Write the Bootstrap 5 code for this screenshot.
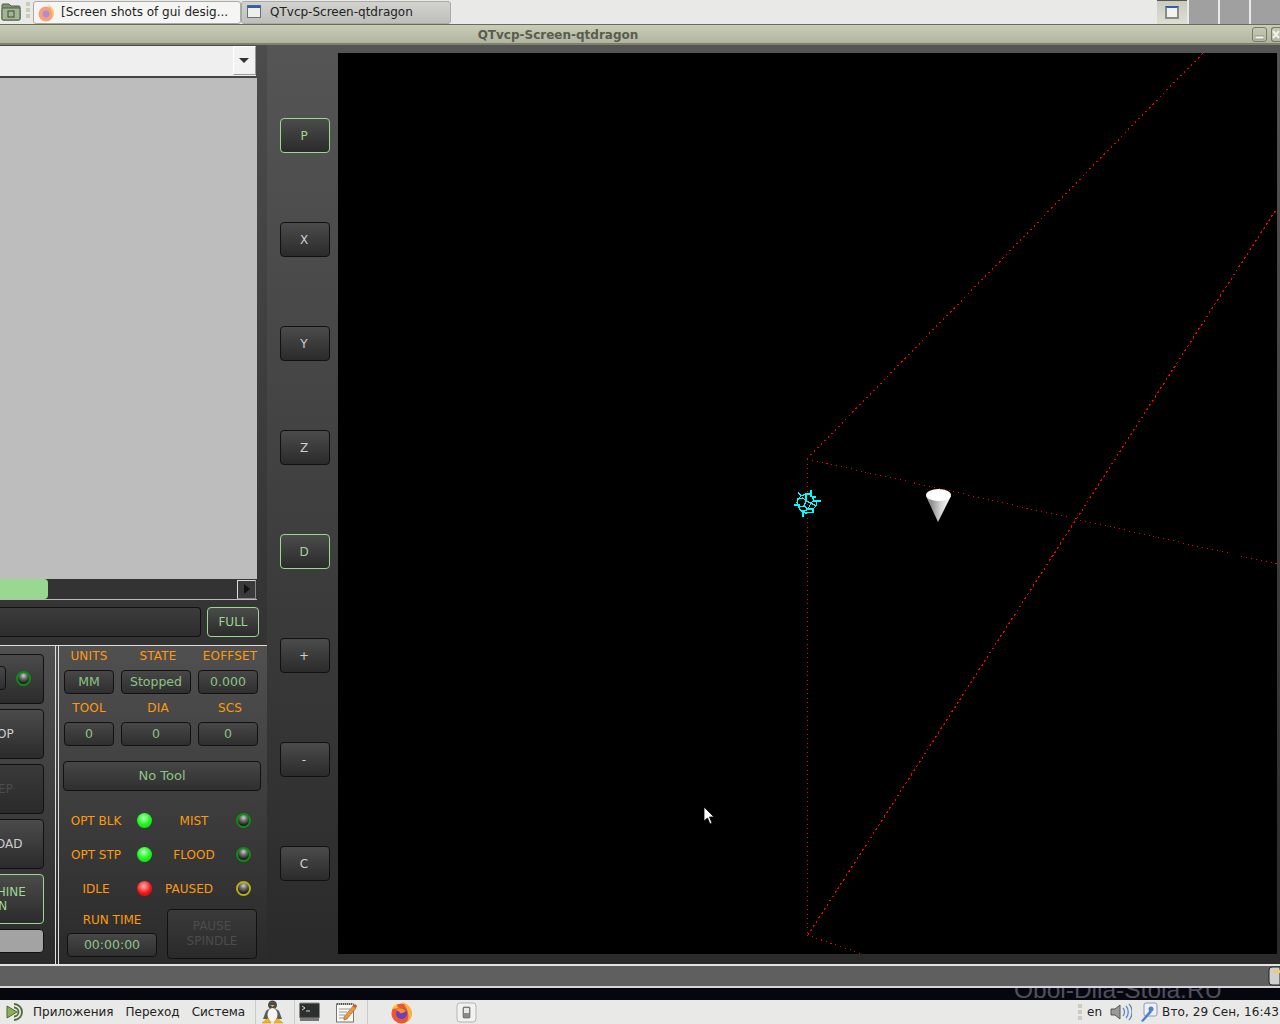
<!DOCTYPE html>
<html lang="ru">
<head>
  <meta charset="UTF-8">
  <meta name="viewport" content="width=device-width, initial-scale=1.0">
  <title>QTvcp-Screen-qtdragon</title>
  <link rel="stylesheet" href="https://cdn.jsdelivr.net/npm/bootstrap@5.3.0/dist/css/bootstrap.min.css">
  <style>
    html, body { width: 1280px; height: 1024px; overflow: hidden; margin: 0; }
    body { font-family: "DejaVu Sans", sans-serif; font-size: 12px; background: #e8e8e6; }
    svg { flex-shrink: 0; }

    /* top panel */
    .top-panel { height: 24px; background: #e9e9e7; color: #222; font-size: 12px; }
    .task { height: 23px; margin-top: 1px; padding-bottom: 2px; border: 1px solid #a9a9a5; border-radius: 3px; }
    .task-on { width: 208px; margin-left: 2px; background: #f5f5f3; }
    .task-off { width: 210px; background: linear-gradient(#d2d2ce, #bebeba); }
    .grip { width: 5px; margin-left: 5px; }
    .grip i { display: block; width: 4px; height: 4px; margin: 2px 0; background: #c9cbbd; }
    .ws-cell { width: 30px; height: 24px; background: linear-gradient(#c9ccbc, #dcdfd2); border-top: 1px solid #555; }
    .ws-off { width: 29px; height: 24px; margin-left: 2px; background: #a0a0a0; }
    .ws-icon { width: 14px; height: 13px; background: #f2f2f0; border: 2px solid #8a8a8a; border-top-color: #2d5fae; }

    /* title bar */
    .title-bar { height: 21px; background: linear-gradient(#c9cdb8, #b1b59e); border-top: 1px solid #6b6d5c; border-bottom: 2px solid #7e8170; }
    .title-text { width: 1116px; padding-top: 1px; font-weight: 700; font-size: 12px; color: #5a5d4e; }
    .win-btn { width: 15px; height: 15px; border: 1px solid #777a69; border-radius: 3px; }
    .win-close { width: 9px; border-right: 0; border-radius: 3px 0 0 3px; }

    /* app window */
    .app-body { height: 919px; background: linear-gradient(#555, #2a2a2a); color: #9ad98e; }
    .left-col { width: 267px; background: rgba(0,0,0,.1); }
    .combo { width: 256px; height: 32px; margin-top: 1px; background: #efefef; border-bottom: 2px solid #444; }
    .combo-drop { width: 23px; height: 29px; background: #f2f2f2; border: 1px solid #fff; border-right-color: #999; border-bottom-color: #999; }
    .caret-down { width: 0; height: 0; border: 5px solid transparent; border-top: 5px solid #333; border-bottom: 0; margin-right: 2px; }
    .file-view { width: 257px; height: 501px; background: #bdbdbd; }
    .scroll-row { width: 257px; height: 21px; background: #333; border-bottom: 1px solid #bbb; }
    .scroll-thumb { width: 48px; height: 20px; background: #98d890; border-radius: 0 4px 4px 0; }
    .scroll-arrow { width: 19px; height: 19px; margin-right: 1px; background: #3a3a3a; border: 1px solid #ddd; border-right-color: #888; border-bottom-color: #888; }
    .caret-right { width: 0; height: 0; border: 5px solid transparent; border-left: 6px solid #111; border-right: 0; }
    .path-row { height: 30px; margin-top: 7px; gap: 6px; }
    .path-box { width: 201px; height: 30px; background: linear-gradient(#3c3c3c, #2d2d2d); border: 1px solid #111; border-left: 0; border-radius: 0 4px 4px 0; }
    .full-btn { width: 52px; }
    .lower-pane { border-top: 1px solid #ddd; height: 319px; background: linear-gradient(#505050, #2a2a2a); }
    .side-pane { width: 56px; overflow: hidden; border-right: 1px solid #ddd; padding-top: 8px; }
    .side-stack { width: 92px; margin-left: -48px; gap: 5px; }
    .info-pane { width: 209px; margin-left: 2px; border-left: 1px solid #ddd; }

    .gui-btn { display: flex; align-items: center; justify-content: center; padding: 0; font-size: 12px; line-height: 14px; color: #cfcfcf; background: linear-gradient(#4b4b4b, #2b2b2b); border: 1px solid #111; border-radius: 4px; }
    .gui-green { color: #9ad98e; border: 1px solid #9ad98e; }
    .gui-off { color: #4c4c4c; background: linear-gradient(#3a3a3a, #2a2a2a); line-height: 15px; }
    .gui-tall { height: 50px; }
    .gui-box { display: flex; align-items: center; justify-content: center; height: 24px; font-size: 12.5px; color: #8cc483; background: linear-gradient(#474747, #2f2f2f); border: 1px solid #111; border-radius: 4px; }
    .gui-bar { height: 24px; background: #a3a3a3; border: 1px solid #111; border-radius: 4px; }
    .led-seat { width: 40px; margin-right: 10px; margin-top: -2px; }
    .led-first { margin-right: 12px; margin-top: -2px; }
    .orange { color: #ff9a0d; }

    .stat-grid { display: grid; grid-template-columns: 50px 70px 60px; column-gap: 7px; row-gap: 4px; margin-left: 5px; }
    .stat-label { display: flex; align-items: center; justify-content: center; height: 20px; white-space: nowrap; letter-spacing: .2px; }
    .tool-box { width: 198px; height: 30px; margin: 15px 0 12px 4px; font-size: 13px; }
    .led-row { display: grid; grid-template-columns: 78px 19px 80px 19px; height: 34px; align-items: center; }
    .led-cap { padding: 2px 4px 0 0; }
    .led-cap-wide { padding: 2px 14px 0 0; }
    .led { width: 15px; height: 15px; border-radius: 50%; }
    .led-dark { background: radial-gradient(circle at 50% 25%, #cfcfcf 0, #6a6a6a 35%, #242424 70%, #111); border: 2px solid #0a8f0f; }
    .led-amber { background: radial-gradient(circle at 50% 25%, #cfcfcf 0, #6a6a6a 35%, #242424 70%, #111); border: 2px solid #b8b010; }
    .led-green { background: radial-gradient(circle at 45% 35%, #b6ffb6, #1cf51c 50%, #0fd00f); }
    .led-red { background: radial-gradient(circle at 45% 35%, #ffb0b0, #f31414 55%, #d80000); }
    .time-col { width: 90px; margin-left: 8px; }
    .time-label { height: 22px; margin-bottom: 2px; }
    .pause-btn { width: 90px; height: 50px; margin-left: 10px; }

    .tool-col { width: 71px; padding-top: 73px; gap: 69px; }
    .axis-btn { width: 50px; height: 35px; margin-left: 13px; padding: 1px 2px 0 0; }
    .view-col { width: 942px; padding: 8px 0 9px 0; }
    .gl-view { width: 939px; height: 901px; background: #000; }
    .gl-view svg { display: block; }

    /* bottom of the window and desktop */
    .status-bar { height: 22px; background: #5f5f5f; border-top: 2px solid #e3e3e3; }
    .desk-band { height: 14px; background: #06060f; border-top: 2px solid #d6d6d6; overflow: hidden; padding-left: 1014px; }
    .desk-text { height: 12px; margin-top: -4.5px; font-family: "Liberation Sans", sans-serif; font-size: 24.5px; line-height: 12px; color: #4f4f5c; white-space: nowrap; }

    /* bottom panel */
    .bottom-panel { height: 24px; background: #e9e9e7; color: #222; font-size: 12px; }
    .vsep { width: 1px; height: 24px; background: #c9c9c6; }
    .clock { white-space: nowrap; letter-spacing: .1px; margin-right: 1px; }
  </style>
</head>
<body>

  <!-- верхняя панель -->
  <div class="top-panel d-flex">
    <svg style="margin:2px 0 0 1px" width="20" height="19" viewBox="0 0 20 19"><path d="M1 3a1 1 0 0 1 1-1h6l2 2h8a1 1 0 0 1 1 1v12a1 1 0 0 1-1 1H2a1 1 0 0 1-1-1z" fill="#7f9672" stroke="#4e5c45"/><rect x="1" y="6" width="18" height="12" rx="1.500" fill="#a2b695" stroke="#4e5c45"/><rect x="7" y="9" width="6" height="6" fill="none" stroke="#3f4a38"/></svg>
    <div class="grip"><i></i><i></i><i></i></div>
    <div class="task task-on d-flex align-items-center">
      <svg style="margin:2px 0 0 3px" width="18" height="18" viewBox="0 0 18 18"><circle cx="9" cy="10" r="7.500" fill="#f7a07c"/><path d="M10 0c4 2 7 5 7 9 0 2-1 4-2 5 1-5-1-10-5-14z" fill="#f9c95a"/><circle cx="9" cy="10" r="3.400" fill="#b08bd8"/></svg>
      <span class="text-nowrap" style="margin-left:6px">[Screen shots of gui desig...</span>
    </div>
    <div class="task task-off d-flex align-items-center">
      <svg style="margin-left:5px" width="14" height="13" viewBox="0 0 14 13"><rect x=".5" y=".5" width="13" height="12" fill="#eef0e8" stroke="#6a6f7a"/><rect x=".5" y=".5" width="13" height="2.500" fill="#2d5fae"/></svg>
      <span class="text-nowrap" style="margin-left:9px">QTvcp-Screen-qtdragon</span>
    </div>
    <div class="flex-grow-1"></div>
    <div class="ws-cell d-flex align-items-center justify-content-center"><div class="ws-icon"></div></div>
    <div class="ws-off"></div>
    <div class="ws-off"></div>
    <div class="ws-off"></div>
  </div>

  <!-- заголовок окна -->
  <div class="title-bar d-flex align-items-center">
    <div class="title-text text-center">QTvcp-Screen-qtdragon</div>
    <div class="flex-grow-1"></div>
    <div class="win-btn d-flex align-items-end justify-content-center me-1"><svg width="9" height="6"><rect y="1" width="9" height="3" fill="#f2f2ea" stroke="#777a69" stroke-width=".6"/></svg></div>
    <div class="win-btn win-close d-flex align-items-center"><svg width="8" height="9"><path d="M1 1l6 7M7 1L1 8" stroke="#f2f2ea" stroke-width="2"/></svg></div>
  </div>

  <div class="app-body d-flex">
    <div class="left-col d-flex flex-column">
      <div class="combo d-flex justify-content-end">
        <div class="combo-drop d-flex align-items-center justify-content-center"><div class="caret-down"></div></div>
      </div>
      <div class="file-view"></div>
      <div class="scroll-row d-flex justify-content-between align-items-center">
        <div class="scroll-thumb"></div>
        <div class="scroll-arrow d-flex align-items-center justify-content-center"><div class="caret-right"></div></div>
      </div>
      <div class="path-row d-flex">
        <div class="path-box"></div>
        <button class="btn gui-btn gui-green full-btn">FULL</button>
      </div>
      <div class="lower-pane d-flex mt-2">
        <div class="side-pane">
          <div class="side-stack d-flex flex-column">
            <div class="gui-btn gui-tall justify-content-end">
              <div class="gui-box led-seat"></div>
              <div class="led led-dark led-first"></div>
            </div>
            <button class="btn gui-btn gui-tall">STOP</button>
            <button class="btn gui-btn gui-off gui-tall">STEP</button>
            <button class="btn gui-btn gui-tall">RELOAD</button>
            <button class="btn gui-btn gui-green gui-tall">MACHINE<br>ON</button>
            <div class="gui-bar"></div>
          </div>
        </div>
        <div class="info-pane">
          <div class="stat-grid text-center">
            <div class="stat-label orange">UNITS</div>
            <div class="stat-label orange ps-1">STATE</div>
            <div class="stat-label orange ps-1">EOFFSET</div>
            <div class="gui-box">MM</div>
            <div class="gui-box">Stopped</div>
            <div class="gui-box">0.000</div>
            <div class="stat-label orange">TOOL</div>
            <div class="stat-label orange ps-1">DIA</div>
            <div class="stat-label orange ps-1">SCS</div>
            <div class="gui-box">0</div>
            <div class="gui-box">0</div>
            <div class="gui-box">0</div>
          </div>
          <div class="gui-box tool-box">No Tool</div>
          <div class="led-row orange text-center">
            <div class="led-cap">OPT BLK</div><div class="led led-green"></div>
            <div class="led-cap">MIST</div><div class="led led-dark"></div>
          </div>
          <div class="led-row orange text-center">
            <div class="led-cap">OPT STP</div><div class="led led-green"></div>
            <div class="led-cap">FLOOD</div><div class="led led-dark"></div>
          </div>
          <div class="led-row orange text-center">
            <div class="led-cap">IDLE</div><div class="led led-red"></div>
            <div class="led-cap-wide">PAUSED</div><div class="led led-amber"></div>
          </div>
          <div class="d-flex mt-1">
            <div class="time-col">
              <div class="time-label orange d-flex align-items-center justify-content-center">RUN TIME</div>
              <div class="gui-box">00:00:00</div>
            </div>
            <button class="btn gui-btn gui-off pause-btn">PAUSE<br>SPINDLE</button>
          </div>
        </div>
      </div>
    </div>

    <div class="tool-col d-flex flex-column">
      <button class="btn gui-btn gui-green axis-btn">P</button>
      <button class="btn gui-btn axis-btn">X</button>
      <button class="btn gui-btn axis-btn">Y</button>
      <button class="btn gui-btn axis-btn">Z</button>
      <button class="btn gui-btn gui-green axis-btn">D</button>
      <button class="btn gui-btn axis-btn">+</button>
      <button class="btn gui-btn axis-btn">-</button>
      <button class="btn gui-btn axis-btn">C</button>
    </div>

    <div class="view-col">
      <div class="gl-view">
        <svg width="939" height="901" viewBox="338 53 939 901">
          <defs>
            <linearGradient id="coneFill" x1="0" x2="1" y1="0" y2="0">
              <stop offset="0" stop-color="#b0b0b0"/><stop offset=".2" stop-color="#8e8e8e"/><stop offset=".6" stop-color="#d8d8d8"/><stop offset="1" stop-color="#fff"/>
            </linearGradient>
          </defs>
          <g fill="none" stroke="#f00000" stroke-width="1.300" shape-rendering="crispEdges">
            <path d="M807 459L1203 53" stroke-dasharray="1.500 3.500"/>
            <path d="M807 459L1277 564" stroke-dasharray="1 4" stroke-width="1"/>
            <path d="M807 459V935" stroke-dasharray="1 3.500" stroke-width="1"/>
            <path d="M808 935L1277 208" stroke-dasharray="2 3"/>
            <path d="M807 935L862 954" stroke-dasharray="1 4" stroke-width="1"/>
          </g>
          <path d="M926 496L938 522L951 496Z" fill="url(#coneFill)"/>
          <ellipse cx="938.500" cy="495" rx="12.500" ry="6" fill="#fff"/>
          <g fill="none" stroke="#00ffff" stroke-width="1.300" shape-rendering="crispEdges">
            <path d="M794 505H800M813 501H821M811 490V497M803 510V517"/>
            <path d="M798 492L801 496L806 494H810L812 497H816"/>
            <path d="M797 503L798 499L803 498L806 501L804 506L799 507Z"/>
            <path d="M806 494V501L811 503L814 500L812 497M801 496L798 499"/>
            <path d="M811 503L808 509L804 506M808 509L803 512L800 510L799 507"/>
            <path d="M808 509H813L816 506L817 501M813 509V512L806 513L803 512M816 506L811 503"/>
          </g>
          <path d="M704 807V821L707.500 818L710 824L712 823L709.500 817H714Z" fill="#fff" stroke="#000" stroke-width=".8"/>
        </svg>
      </div>
    </div>
  </div>

  <div class="status-bar d-flex justify-content-end">
    <svg width="13" height="20" viewBox="0 0 13 20"><path d="M13 1H5a3 3 0 0 0-3 3v12a3 3 0 0 0 3 3h8z" fill="#cfcfcf" stroke="#222"/><path d="M6 4h7v3H6z" fill="#e8d070"/></svg>
  </div>
  <div class="desk-band"><div class="desk-text">Oboi-Dlia-Stola.RU</div></div>

  <!-- нижняя панель -->
  <div class="bottom-panel d-flex align-items-center">
    <svg style="margin-left:5px" width="22" height="22" viewBox="0 0 22 22"><path d="M2 5l10 6-10 6z" fill="#8cae5a" stroke="#4a6b2a"/><path d="M9 3a8 8 0 1 1 0 16M9 6.500a4.500 4.500 0 1 1 0 9" fill="none" stroke="#4d6b34" stroke-width="1.800"/></svg>
    <span class="text-nowrap" style="margin-left:6px">Приложения</span>
    <span class="text-nowrap" style="margin-left:12px">Переход</span>
    <span class="text-nowrap" style="margin-left:12px">Система</span>
    <div class="vsep" style="margin-left:10px"></div>
    <svg style="margin-left:5px" width="23" height="24" viewBox="0 0 23 24"><circle cx="11.500" cy="5" r="4.500" fill="#4c4c4c"/><path d="M5 11c2-3 11-3 13 0l3 8H2z" fill="#5a5a5a"/><ellipse cx="11.500" cy="14.500" rx="5" ry="6.500" fill="#f4f4f4"/><path d="M9.500 5h4l-2 2z" fill="#f2b41c"/><path d="M1 23l6-5 3 5zM13 23l3-5 6 5z" fill="#f2b41c" stroke="#c88a10" stroke-width=".5"/></svg>
    <div class="vsep" style="margin-left:10px"></div>
    <svg style="margin-left:4px" width="21" height="20" viewBox="0 0 21 20"><rect x=".5" y="1" width="20" height="15" rx="1" fill="#2b2f2d" stroke="#8a8a8a"/><path d="M3 4l3 2-3 2M7 9h4" stroke="#d8d8d8" fill="none"/><rect x="1" y="16" width="19" height="3" fill="#777"/></svg>
    <svg style="margin-left:15px" width="22" height="22" viewBox="0 0 22 22"><rect x="1.500" y="3" width="17" height="18" fill="#f8f8f4" stroke="#777"/><path d="M4 8h11M4 11h8M4 14h6M4 17h6" stroke="#999"/><path d="M2 3h16" stroke="#555" stroke-width="2" stroke-dasharray="1 1"/><path d="M9 16l9-11 3 2-9 11-3 1z" fill="#e89a3c" stroke="#a05a20" stroke-width=".6"/><path d="M18 5l3 2 1-2-2-2z" fill="#d84a3a"/></svg>
    <div class="vsep" style="margin-left:10px"></div>
    <svg style="margin-left:22px" width="23" height="23" viewBox="0 0 23 23">
      <circle cx="11.500" cy="12.500" r="10" fill="#f0562c"/>
      <path d="M12 1c6 2 10 6 10 12a10 10 0 0 1-5 8c3-6 1-14-5-20z" fill="#fbb03b"/>
      <path d="M2 8c1-3 3-4 5-5 0 3 1 4 3 4-3 0-6 1-8 1z" fill="#f9c23c"/>
      <circle cx="11.500" cy="12.500" r="5.500" fill="#6c3fc0"/>
      <path d="M6 9c3-3 8-2 10 1-2 1-4 3-6 2 0-1-2-2-4-3z" fill="#f7902a"/>
    </svg>
    <svg style="margin-left:43px" width="21" height="21" viewBox="0 0 21 21"><rect x="1" y="1" width="19" height="19" rx="3" fill="#f2f2f0" stroke="#b5b5b2"/><rect x="7" y="5" width="7" height="11" rx="1" fill="#8a8a8a" stroke="#555" stroke-width=".6"/><rect x="8" y="6" width="5" height="5" fill="#e8e8e8"/></svg>
    <div class="flex-grow-1"></div>
    <div class="grip"><i></i><i></i><i></i></div>
    <span class="ms-1">en</span>
    <svg style="margin-left:8px" width="22" height="20" viewBox="0 0 22 20"><path d="M1 7h4l5-4v14l-5-4H1z" fill="#9a9a9a" stroke="#555"/><path d="M13 6c2 2 2 6 0 8M16 4c3 3 3 9 0 12M19 2c4 4 4 12 0 16" fill="none" stroke="#5c84c4" stroke-width="1.300"/></svg>
    <svg style="margin-left:8px" width="18" height="20" viewBox="0 0 18 20"><rect x="4" y="1" width="13" height="13" rx="2" fill="#eef0f4" stroke="#8a9ab8"/><path d="M1 19l9-11 2 2-9 10z" fill="#4f80c8"/><circle cx="11" cy="7" r="2.500" fill="#4f80c8"/></svg>
    <span class="clock" style="margin-left:4px">Вто, 29 Сен, 16:43</span>
  </div>

  <script src="https://cdn.jsdelivr.net/npm/bootstrap@5.3.0/dist/js/bootstrap.bundle.min.js"></script>
</body>
</html>
